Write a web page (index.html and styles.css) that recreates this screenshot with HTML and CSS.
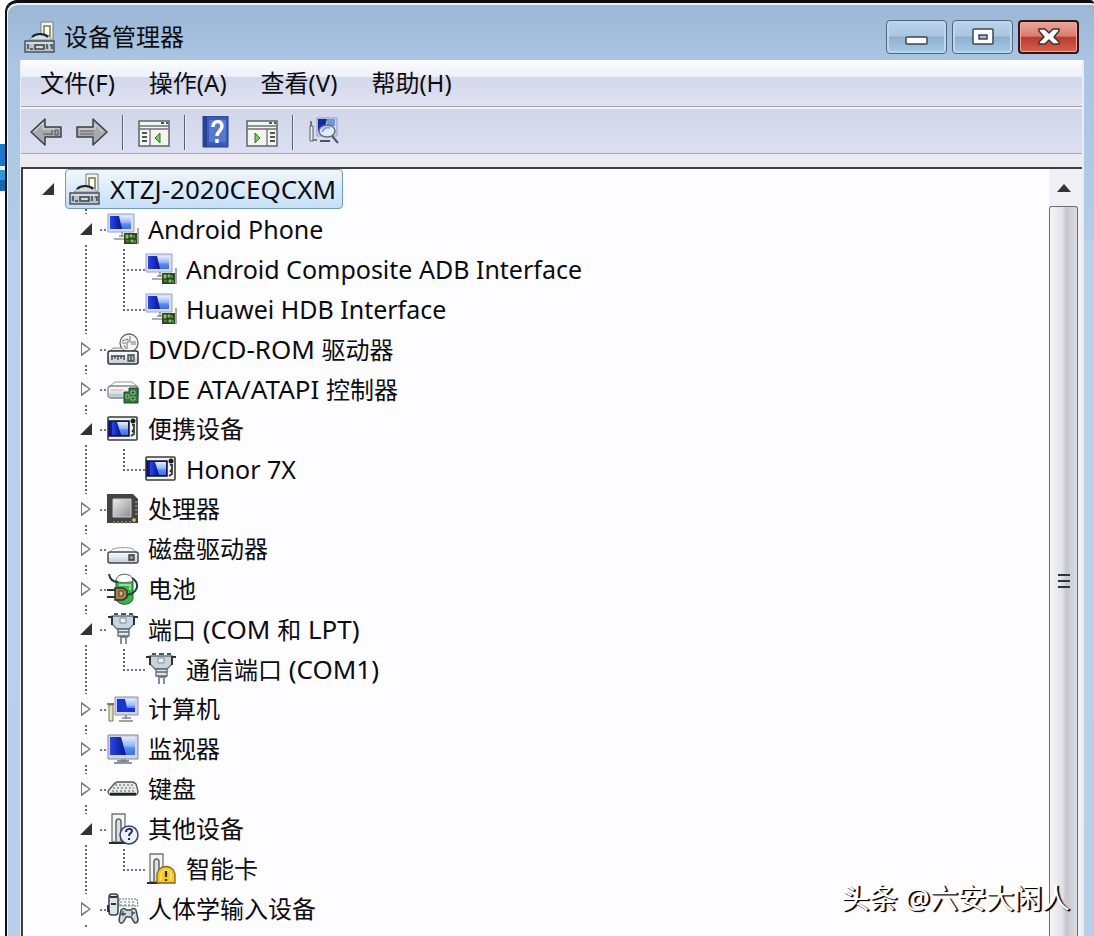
FILE: index.html
```html
<!DOCTYPE html>
<html lang="zh">

<head>
  <title>设备管理器</title>
  <meta charset="utf-8">
  <meta name="viewport" content="width=device-width, initial-scale=1.0">
  <link rel="stylesheet" href="styles.css">
</head>

<body>
  <!-- icons -->
  <svg class="sprite" aria-hidden="true">
    <defs>
      <linearGradient id="screen" x1="0" y1="0" x2="0" y2="1">
        <stop offset="0" stop-color="#e3edfd"/>
        <stop offset="0.5" stop-color="#8fb5f6"/>
        <stop offset="0.6" stop-color="#5d8bf0"/>
        <stop offset="1" stop-color="#3f6fe6"/>
      </linearGradient>
      <linearGradient id="glass" x1="0" y1="0" x2="1" y2="0">
        <stop offset="0" stop-color="#2a48e0"/>
        <stop offset="1" stop-color="#06128f"/>
      </linearGradient>
      <linearGradient id="metal" x1="0" y1="0" x2="1" y2="1">
        <stop offset="0" stop-color="#eceded"/>
        <stop offset="1" stop-color="#8b8d92"/>
      </linearGradient>
      <linearGradient id="body" x1="0" y1="0" x2="0" y2="1">
        <stop offset="0" stop-color="#fff"/>
        <stop offset="1" stop-color="#c2cad4"/>
      </linearGradient>
    </defs>

    <symbol id="i-root" viewBox="0 0 32 32">
      <path d="M17 1h12v19H17z" fill="#f4f6ee" stroke="#777c78"/>
      <path d="M20 5h6v10h-6z" fill="#fff" stroke="#75794d" stroke-width="1.5"/>
      <path d="M5 19l3-3c4-4 14-4 18 0l2 3z" fill="#d5dce2" stroke="#879099"/>
      <path d="M8 16c4-4 12-4 16 0" fill="none" stroke="#1c2226" stroke-width="2"/>
      <path d="M1 20h29v11H1z" fill="#b9c2c8" stroke="#4b565c" stroke-width="1.5"/>
      <path d="M4 23v5M6 28h3M11 24h9v4h-9zM23 23v5M26 24h2v4" fill="none" stroke="#38454b" stroke-width="1.5"/>
      <path d="M2 22h27M13 26h5" fill="none" stroke="#eef3f5"/>
    </symbol>

    <symbol id="i-device" viewBox="0 0 32 32">
      <path d="M1 1h26v18H1z" fill="#d9def2" stroke="#9a9fc4"/>
      <path d="M3 3h21v13H3z" fill="url(#screen)"/>
      <path d="M3 3h9l3 13H3z" fill="url(#glass)"/>
      <path d="M15 19v5M7 26h10M12 23h5" fill="none" stroke="#8c9690" stroke-width="1.5"/>
      <path d="M17 20h13v11H17z" fill="#294b22"/>
      <path d="M31 15v16" stroke="#555" fill="none"/>
      <path d="M19 22h2v3h-2zM23 22h2v2h-2zM27 22v3M19 28h3M24 27h2v2h-2zM28 27v3" fill="#a9c974" stroke="#86b35c"/>
    </symbol>

    <symbol id="i-dvd" viewBox="0 0 32 32">
      <circle cx="22" cy="10" r="9" fill="#f4f5f5" stroke="#606466" stroke-width="1.3"/>
      <path d="M15 8l6-2v4h-6M23 3v6h6M20 11v5M24 11h5M17 12l2 4" fill="none" stroke="#747a7b"/>
      <path d="M3 18l3-3h9l3 3z" fill="#e8eaeb" stroke="#8d9192"/>
      <rect x="1" y="18" width="30" height="13" rx="2" fill="url(#body)" stroke="#2e3133" stroke-width="1.5"/>
      <path d="M4 23h14M5 23v4M8 23v3M11 23v4M14 23v3M17 23v4" stroke="#43484a" fill="none" stroke-width="1.4"/>
      <path d="M21 22h6v6h-6zM24 22v6" fill="#bbb" stroke="#43484a" stroke-width="1.3"/>
    </symbol>

    <symbol id="i-ide" viewBox="0 0 32 32">
      <path d="M2 14l6-5h17l6 5z" fill="#fff" stroke="#90989a"/>
      <rect x="1" y="13" width="30" height="12" rx="3" fill="url(#body)" stroke="#7d8789" stroke-width="1.3"/>
      <path d="M4 17h12" stroke="#eec5d8" stroke-width="2"/>
      <path d="M3 22h12" stroke="#a9cfc7" stroke-width="2"/>
      <path d="M17 19h5v-4h9v15H17z" fill="#2f7540" stroke="#214a2a"/>
      <path d="M19 22h3v3h-3zM24 18h4v3h-4zM24 24h4v3h-4z" fill="#234a2b" stroke="#9fc78d"/>
    </symbol>

    <symbol id="i-portable" viewBox="0 0 32 32">
      <rect x="1" y="4" width="29" height="23" rx="1" fill="#f1f1ec" stroke="#3a3c3c" stroke-width="1.6"/>
      <path d="M2 8h20v15H2z" fill="#0e1d94" stroke="#121536" stroke-width="1.5"/>
      <path d="M9 9h12v13h-7z" fill="url(#screen)"/>
      <path d="M5 9h5l4 13H5z" fill="url(#glass)"/>
      <circle cx="26" cy="8" r="2.5" fill="#1b1d1f"/>
      <path d="M25 12h2v4l-2 3M27 15v6l-3 2" fill="none" stroke="#34383a" stroke-width="1.8"/>
    </symbol>

    <symbol id="i-cpu" viewBox="0 0 32 32">
      <path d="M0 1h26l5 5v24H0z" fill="#454341"/>
      <path d="M6 6h18v18H6z" fill="url(#metal)" stroke="#c7c9cc"/>
      <path d="M7 28v3M11 28v3M15 28v3M19 28v3M23 28v3M28 9h3M28 13h3M28 17h3M28 21h3" stroke="#b8a688" fill="none"/>
      <circle cx="27" cy="27" r="2" fill="#d2b15e"/>
    </symbol>

    <symbol id="i-disk" viewBox="0 0 32 32">
      <path d="M2 20l4-4c5-2 15-2 20 0l4 4z" fill="#f7f8f8" stroke="#999fa1"/>
      <rect x="1" y="19" width="30" height="11" rx="2" fill="url(#body)" stroke="#46494c" stroke-width="1.5"/>
      <path d="M22 22h5v5h-5z" fill="#8f9996" stroke="#30383a" stroke-width="1.3"/>
    </symbol>

    <symbol id="i-battery" viewBox="0 0 32 32">
      <path d="M9 9c0-10 17-10 17 0v17c-2 7-15 7-17 0z" fill="#37b24c" stroke="#1d6b2b"/>
      <path d="M9 8c0-9 17-9 17 0-4 2-13 2-17 0z" fill="#fff" stroke="#5a6668"/>
      <path d="M12 12h11v5" stroke="#8be38f" stroke-width="2" fill="none"/>
      <path d="M2 1c1 6 4 8 9 8M25 5c8 5 7 16-7 17" fill="none" stroke="#223a36" stroke-width="2"/>
      <path d="M0 17h9M0 24h9" stroke="#243c23" stroke-width="2"/>
      <path d="M8 15h8l4 3v6l-4 3H8z" fill="#a28358" stroke="#3b2c1d" stroke-width="1.5"/>
      <path d="M12 18h4v5h-4z" fill="#d7bd8b" stroke="#4a3a25"/>
    </symbol>

    <symbol id="i-port" viewBox="0 0 32 32">
      <path d="M5 3h22v8l-5 5H10l-5-5z" fill="#c9d3db" stroke="#65737c" stroke-width="1.3"/>
      <path d="M1 4h4v8M31 4h-4v8" fill="none" stroke="#27353d" stroke-width="2"/>
      <path d="M7 1h4M14 1h5M22 1h4" stroke="#49565d" stroke-width="2"/>
      <path d="M13 5h6v5h-6z" fill="#eef2f5" stroke="#7d8d97"/>
      <path d="M11 16h11v7H11z" fill="#dfe5ea" stroke="#5c6970" stroke-width="1.3"/>
      <path d="M11 19h11M13 24h8M14 25v6M19 25v6" fill="none" stroke="#596971" stroke-width="1.5"/>
    </symbol>

    <symbol id="i-computer" viewBox="0 0 32 32">
      <path d="M2 12h4v16H2z" fill="#e6e8b0" stroke="#77795b"/>
      <path d="M0 11h7" stroke="#555" stroke-width="1.5"/>
      <path d="M8 4h23v18H8z" fill="#cfd3ea" stroke="#8d90b5"/>
      <path d="M10 6h18v13H10z" fill="url(#screen)"/>
      <path d="M10 6h8l2 9h8v4H10z" fill="#1a34cd"/>
      <path d="M19 22v4M15 25h9M12 28h14" fill="none" stroke="#7d8586" stroke-width="1.6"/>
    </symbol>

    <symbol id="i-monitor" viewBox="0 0 32 32">
      <path d="M1 2h30v24H1z" fill="#d1d4e6" stroke="#85889f"/>
      <path d="M3 4h25v18H3z" fill="url(#screen)"/>
      <path d="M3 4h11l5 18H3z" fill="url(#glass)"/>
      <path d="M15 26v3M18 26v3M10 28h12M7 30h18" fill="none" stroke="#6b7475" stroke-width="1.3"/>
    </symbol>

    <symbol id="i-keyboard" viewBox="0 0 32 32">
      <path d="M1 18l6-7c1-1 2-2 4-2h14c2 0 3 1 4 2l2 7c0 3-1 4-3 4H4c-2 0-3-2-3-4z" fill="#e8e9e9" stroke="#505557" stroke-width="1.3"/>
      <path d="M8 12h18M6 15h21M5 18h23" stroke="#888d8e" stroke-width="1.5" stroke-dasharray="2 2" fill="none"/>
      <path d="M3 21h26" stroke="#1f2526" stroke-width="2.5"/>
    </symbol>

    <symbol id="i-other" viewBox="0 0 32 32">
      <path d="M5 1h13v28H5z" fill="#f3f3f3" stroke="#707374" stroke-width="1.3"/>
      <path d="M9 28V9c0-4 5-4 5 0v19" fill="#dedfe2" stroke="#626568" stroke-width="1.5"/>
      <path d="M2 30h17" stroke="#2b2d2d" stroke-width="2"/>
      <circle cx="22" cy="22" r="9" fill="#eef0fb" stroke="#354075" stroke-width="1.5"/>
      <path d="M19 19c0-4 6-4 6-1 0 2-3 2-3 5M22 25v2" fill="none" stroke="#1e2d66" stroke-width="2"/>
    </symbol>

    <symbol id="i-card" viewBox="0 0 32 32">
      <path d="M5 1h13v28H5z" fill="#f3f3f3" stroke="#707374" stroke-width="1.3"/>
      <path d="M9 28V9c0-4 5-4 5 0v19" fill="#dedfe2" stroke="#626568" stroke-width="1.5"/>
      <path d="M2 30h12" stroke="#2b2d2d" stroke-width="2"/>
      <path d="M12 30v-9c2-10 16-10 18 0v9z" fill="#f7c82a" stroke="#80661a" stroke-width="1.3"/>
      <path d="M16 27v-6c1-5 9-5 10 0v6" fill="none" stroke="#fff0a0"/>
      <path d="M21 18v6M21 26v2" stroke="#3b2c00" stroke-width="2.2"/>
    </symbol>

    <symbol id="i-hid" viewBox="0 0 32 32">
      <rect x="2" y="1" width="9" height="21" rx="3" fill="#dfe4e6" stroke="#364144" stroke-width="1.5"/>
      <path d="M3 4h7M4 11h5M1 12v6h2" fill="none" stroke="#2c3639" stroke-width="2"/>
      <path d="M12 6h18l1 7H12z" fill="#f5f6f6" stroke="#6c7577" stroke-dasharray="2 1"/>
      <path d="M13 9h16M13 12h16" stroke="#6c7577" stroke-dasharray="2 2"/>
      <path d="M14 17c2-2 4-2 5 0h5c1-2 4-2 5 0l2 9c0 5-4 5-5 1l-2-3h-5l-2 4c-2 4-5 2-5-1z" fill="#cfd8dc" stroke="#3a484d" stroke-width="1.5"/>
      <path d="M16 18v5M14 21h5M25 18v5M28 20h-3" fill="none" stroke="#3a484d" stroke-width="1.3"/>
    </symbol>
  </svg>

  <div class="window">
    <header class="titlebar">
      <svg class="icon"><use href="#i-root"/></svg>
      <h1>设备管理器</h1>
      <div class="window-buttons">
        <button class="win-btn" aria-label="最小化">
          <svg viewBox="0 0 24 20"><rect x="1" y="10" width="21" height="7" rx="1" fill="#fff" stroke="#3d4650" stroke-width="1.5"/></svg>
        </button>
        <button class="win-btn" aria-label="最大化">
          <svg viewBox="0 0 24 20"><rect x="2" y="2" width="20" height="15" rx="1" fill="#fff" stroke="#3d4650" stroke-width="1.5"/><rect x="8" y="8" width="8" height="4" fill="#9fc0df" stroke="#3d4650" stroke-width="1.5"/></svg>
        </button>
        <button class="win-btn close" aria-label="关闭">
          <svg viewBox="0 0 24 20"><path d="M2 2h6l4 4 4-4h6v2l-5 6 5 5v2h-6l-4-4-4 4H2v-2l5-5-5-6z" fill="#fff" stroke="#45302f" stroke-width="1.5" stroke-linejoin="round"/></svg>
        </button>
      </div>
    </header>

    <main class="content">
      <nav class="menubar">
        <button>文件(F)</button>
        <button>操作(A)</button>
        <button>查看(V)</button>
        <button>帮助(H)</button>
      </nav>

      <div class="toolbar">
        <button aria-label="后退">
          <svg class="icon" viewBox="0 0 32 32"><path d="M1 16L15 3v8h16v10H15v8z" fill="#a9aaae" stroke="#3e4043" stroke-width="1.5" stroke-linejoin="round"/><path d="M4 16l9-9v6h16" fill="none" stroke="#dcdde1"/><path d="M13 18h9M22 14v5M25 14v5h3v-5z" fill="none" stroke="#515256"/></svg>
        </button>
        <button aria-label="前进">
          <svg class="icon" viewBox="0 0 32 32"><path d="M31 16L17 3v8H1v10h16v8z" fill="#a9aaae" stroke="#3e4043" stroke-width="1.5" stroke-linejoin="round"/><path d="M3 13h16V8l8 8" fill="none" stroke="#dcdde1"/><path d="M4 18h14M4 15h14" fill="none" stroke="#66676c"/></svg>
        </button>
        <span class="sep"></span>
        <button aria-label="显示控制台树">
          <svg class="icon" viewBox="0 0 32 32"><path d="M1 5h30v25H1z" fill="#f4f5ef" stroke="#5d6469" stroke-width="1.5"/><path d="M1 10h30M1 13h30M12 13v17" fill="none" stroke="#6a7176" stroke-width="1.3"/><path d="M4 17h5M4 21h5M4 25h5M23 7h3M28 7h2" stroke="#4f565a" stroke-width="2"/><path d="M22 17l-5 5 5 5z" fill="#7cc66c" stroke="#2d7b2b"/></svg>
        </button>
        <span class="sep"></span>
        <button aria-label="帮助">
          <svg class="icon" viewBox="0 0 32 32"><path d="M3 0h25v31H3z" fill="#3a5ab8" stroke="#243c8c"/><path d="M3 0h4v31H3z" fill="#274398"/><path d="M9 4h17v22H9z" fill="#5578d0"/><path d="M13 11c0-7 9-7 9-1 0 5-5 5-5 10M17 23v4" fill="none" stroke="#fff" stroke-width="3.5"/></svg>
        </button>
        <button aria-label="显示操作窗格">
          <svg class="icon" viewBox="0 0 32 32"><path d="M1 5h30v25H1z" fill="#f4f5ef" stroke="#5d6469" stroke-width="1.5"/><path d="M1 10h30M1 13h30M21 13v17" fill="none" stroke="#6a7176" stroke-width="1.3"/><path d="M24 17h5M24 21h5M24 25h5M23 7h3M28 7h2" stroke="#4f565a" stroke-width="2"/><path d="M9 17l5 5-5 5z" fill="#7cc66c" stroke="#2d7b2b"/></svg>
        </button>
        <span class="sep"></span>
        <button aria-label="扫描检测硬件改动">
          <svg class="icon" viewBox="0 0 32 32"><path d="M2 10h3v15H2z" fill="#eceff1" stroke="#555e66"/><path d="M3 5v5M5 24h4" stroke="#555e66" stroke-width="1.5"/><path d="M9 2h20v18H9z" fill="#cfdcf3" stroke="#8f9bbc"/><path d="M10 3h9l-2 8-7 4z" fill="#12299f"/><path d="M19 3h8v7h-8z" fill="#6f97e4"/><ellipse cx="19" cy="15" rx="8" ry="6" fill="#e3eefa" fill-opacity=".85" stroke="#5e6c80" stroke-width="1.5"/><path d="M14 16c2-4 5-5 8-4" fill="none" stroke="#7fa3d8" stroke-width="2"/><path d="M24 20l6 7M12 25h10" stroke="#4c5560" stroke-width="2"/></svg>
        </button>
      </div>

      <div class="panel">
        <ul class="tree">
          <li>
            <div class="row"><button class="toggle open" aria-label="折叠"></button><span class="item selected"><svg class="icon"><use href="#i-root"/></svg>XTZJ-2020CEQCXM</span></div>
            <ul class="devices">
              <li>
                <div class="row"><button class="toggle open" aria-label="折叠"></button><span class="item latin"><svg class="icon"><use href="#i-device"/></svg>Android Phone</span></div>
                <ul class="leaves">
                  <li class="row"><span class="item latin"><svg class="icon"><use href="#i-device"/></svg>Android Composite ADB Interface</span></li>
                  <li class="row"><span class="item latin"><svg class="icon"><use href="#i-device"/></svg>Huawei HDB Interface</span></li>
                </ul>
              </li>
              <li>
                <div class="row"><button class="toggle" aria-label="展开"></button><span class="item mixed"><svg class="icon"><use href="#i-dvd"/></svg><span>DVD/CD-ROM <span class="cjk">驱动器</span></span></span></div>
              </li>
              <li>
                <div class="row"><button class="toggle" aria-label="展开"></button><span class="item mixed"><svg class="icon"><use href="#i-ide"/></svg><span>IDE ATA/ATAPI <span class="cjk">控制器</span></span></span></div>
              </li>
              <li>
                <div class="row"><button class="toggle open" aria-label="折叠"></button><span class="item"><svg class="icon"><use href="#i-portable"/></svg>便携设备</span></div>
                <ul class="leaves">
                  <li class="row"><span class="item latin"><svg class="icon"><use href="#i-portable"/></svg>Honor 7X</span></li>
                </ul>
              </li>
              <li>
                <div class="row"><button class="toggle" aria-label="展开"></button><span class="item"><svg class="icon"><use href="#i-cpu"/></svg>处理器</span></div>
              </li>
              <li>
                <div class="row"><button class="toggle" aria-label="展开"></button><span class="item"><svg class="icon"><use href="#i-disk"/></svg>磁盘驱动器</span></div>
              </li>
              <li>
                <div class="row"><button class="toggle" aria-label="展开"></button><span class="item"><svg class="icon"><use href="#i-battery"/></svg>电池</span></div>
              </li>
              <li>
                <div class="row"><button class="toggle open" aria-label="折叠"></button><span class="item mixed"><svg class="icon"><use href="#i-port"/></svg><span><span class="cjk">端口</span> (COM <span class="cjk">和</span> LPT)</span></span></div>
                <ul class="leaves">
                  <li class="row"><span class="item mixed"><svg class="icon"><use href="#i-port"/></svg><span><span class="cjk">通信端口</span> (COM1)</span></span></li>
                </ul>
              </li>
              <li>
                <div class="row"><button class="toggle" aria-label="展开"></button><span class="item"><svg class="icon"><use href="#i-computer"/></svg>计算机</span></div>
              </li>
              <li>
                <div class="row"><button class="toggle" aria-label="展开"></button><span class="item"><svg class="icon"><use href="#i-monitor"/></svg>监视器</span></div>
              </li>
              <li>
                <div class="row"><button class="toggle" aria-label="展开"></button><span class="item"><svg class="icon"><use href="#i-keyboard"/></svg>键盘</span></div>
              </li>
              <li>
                <div class="row"><button class="toggle open" aria-label="折叠"></button><span class="item"><svg class="icon"><use href="#i-other"/></svg>其他设备</span></div>
                <ul class="leaves">
                  <li class="row"><span class="item"><svg class="icon"><use href="#i-card"/></svg>智能卡</span></li>
                </ul>
              </li>
              <li>
                <div class="row"><button class="toggle" aria-label="展开"></button><span class="item"><svg class="icon"><use href="#i-hid"/></svg>人体学输入设备</span></div>
              </li>
            </ul>
          </li>
        </ul>

        <div class="scrollbar">
          <button class="scroll-up" aria-label="向上滚动"></button>
          <div class="thumb"><span class="grip"></span></div>
        </div>
      </div>
    </main>
  </div>

  <div class="watermark">头条 @六安大闲人</div>
</body>

</html>
```
FILE: styles.css
```css
* {
  box-sizing: border-box;
}

body {
  position: relative;
  height: 100vh;
  margin: 0;
  overflow: hidden;
  color: #0c0c10;
  /* desktop showing to the left of the window */
  background: linear-gradient(#fff 144px, #1c78c8 144px, #1c78c8 166px, #e8f6fc 166px, #e8f6fc 170px, #2b9ad6 170px, #2b9ad6 180px, #1667b0 180px, #1667b0 191px, #fff 191px);
  font: 24px/32px "Noto Sans", "Noto Sans CJK SC", sans-serif;
}

button {
  padding: 0;
  border: none;
  background: none;
  color: inherit;
  font: inherit;
}

ul {
  list-style: none;
  margin: 0;
  padding: 0;
}

.sprite {
  position: absolute;
  width: 0;
  height: 0;
}

.icon {
  display: block;
  flex: none;
  width: 32px;
  height: 32px;
}

/* window frame */
.window {
  display: flex;
  flex-direction: column;
  height: 100%;
  margin-left: 5px;
  padding: 0 10px 0 13px;
  border-top: 3px solid #0d0a10;
  border-left: 2px solid #10141a;
  border-radius: 12px 4px 0 0;
  background: linear-gradient(#9ab6d3, #a9c5e3 56px, #b2cce8 237px, #bad0ea 237px, #b9cee9);
  box-shadow: inset 1px 2px 0 #e6f0f8;
}

.titlebar {
  display: flex;
  align-items: center;
  height: 57px;
  padding: 11px 5px 0 4px;
}

.titlebar h1 {
  flex: 1;
  margin: 0 0 0 8px;
  font-size: 24px;
  font-weight: normal;
}

.window-buttons {
  display: flex;
  gap: 5px;
}

.win-btn {
  display: flex;
  align-items: center;
  justify-content: center;
  width: 61px;
  height: 34px;
  border: 1px solid #50667e;
  border-radius: 4px;
  background: linear-gradient(#bcd3ec, #a9c5e2 48%, #8dafcd 49%, #a9cae6);
  box-shadow: inset 0 0 0 2px #bdd6ee;
}

.win-btn svg {
  width: 24px;
  height: 20px;
}

.win-btn.close {
  border: 2px solid #351216;
  background: linear-gradient(#e9a79b, #d97b6c 48%, #b93a2c 49%, #d4614f);
  box-shadow: inset 0 0 0 1px #eaa99f;
}

.content {
  display: flex;
  flex: 1;
  flex-direction: column;
  min-height: 0;
  padding: 0 2px 0 1px;
  background: #edebf2;
}

.menubar {
  display: flex;
  height: 47px;
  padding-left: 2px;
  border-bottom: 1px solid #9fa3b0;
  background: linear-gradient(#fdfdff, #eceffa 17px, #d3d8ea 17px, #e0e1f1);
}

.menubar button {
  padding: 0 17px;
}

.toolbar {
  display: flex;
  align-items: center;
  gap: 14px;
  height: 47px;
  padding: 2px 0 0 9px;
  border-top: 2px solid #f1f2fb;
  border-bottom: 1px solid #a5a8b8;
  background: linear-gradient(#d2d6e9, #dcdff2);
}

.sep {
  width: 2px;
  height: 35px;
  border-right: 1px solid #eceffa;
  background: #5b6172;
}

/* device tree */
.panel {
  display: flex;
  flex: 1;
  min-height: 0;
  margin-top: 13px;
  border-top: 2px solid #3c3e44;
  border-left: 2px solid #3c3e44;
  background: #fdfcfe;
}

.tree {
  flex: 1;
  padding-left: 6px;
  overflow: hidden;
}

.devices,
.leaves {
  padding-left: 38px;
}

.row {
  display: flex;
  align-items: center;
  height: 40px;
}

/* dotted connector lines */
.devices > li {
  background: repeating-linear-gradient(#666 0 2px, transparent 2px 4px) 18px 0 / 2px 100% no-repeat;
}

.devices > li > .row {
  background: repeating-linear-gradient(90deg, #777 0 2px, transparent 2px 4px) 33px 20px / 6px 2px no-repeat;
}

.leaves > .row {
  padding-left: 36px;
  background:
    repeating-linear-gradient(#666 0 2px, transparent 2px 4px) 18px 0 / 2px 100% no-repeat,
    repeating-linear-gradient(90deg, #777 0 2px, transparent 2px 4px) 18px 20px / 22px 2px no-repeat;
}

.leaves > .row:last-child {
  background-size: 2px 22px, 22px 2px;
}

.toggle {
  display: flex;
  align-items: center;
  justify-content: center;
  width: 28px;
  height: 30px;
  margin: 0 3px 0 5px;
  background: #fdfcfe;
}

.toggle::before {
  content: "";
  width: 10px;
  height: 15px;
  background: #777;
  clip-path: polygon(0 0, 100% 50%, 0 100%, 0 0, 1px 3px, 1px 12px, 8px 50%, 1px 3px);
}

.toggle.open::before {
  width: 12px;
  height: 12px;
  background: #333237;
  clip-path: polygon(100% 0, 100% 100%, 0 100%);
}

.item {
  display: flex;
  align-items: center;
  gap: 9px;
  height: 40px;
  padding: 0 6px 0 3px;
  border: 1px solid transparent;
  border-radius: 4px;
  white-space: nowrap;
}

.latin {
  font-size: 25px;
}

.mixed {
  font-size: 26px;
}

.cjk {
  font-size: 24px;
}

.item.selected {
  border-color: #739ab8;
  background: linear-gradient(#f0f6fd, #c5dff8);
  font-size: 26px;
}

.scrollbar {
  display: flex;
  flex-direction: column;
  width: 33px;
  padding-right: 4px;
  background: #f0eff3;
}

.scroll-up {
  display: flex;
  align-items: center;
  justify-content: center;
  height: 37px;
}

.scroll-up::before {
  content: "";
  border: 7px solid transparent;
  border-top: none;
  border-bottom: 8px solid #34343a;
}

.thumb {
  display: flex;
  flex: 1;
  align-items: center;
  justify-content: center;
  border: 1px solid #6c6e76;
  border-bottom: none;
  border-radius: 3px 3px 0 0;
  background: linear-gradient(90deg, #f6f6f8, #e3e3e7 45%, #c5c6ce 60%, #dcdce2);
}

.grip {
  width: 12px;
  height: 15px;
  margin-top: 20px;
  background: repeating-linear-gradient(#33343a 0 2px, transparent 2px 6px);
}

.watermark {
  position: absolute;
  right: 24px;
  bottom: 22px;
  color: #fff;
  font-size: 28px;
  text-shadow: 1px 1px 0 #000, 2px 1px 1px #000;
}
```
